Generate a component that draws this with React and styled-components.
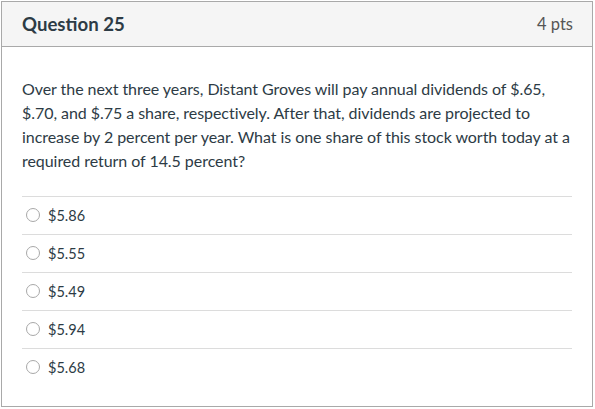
import React from "react";
import styled, { createGlobalStyle } from "styled-components";

const GlobalStyle = createGlobalStyle`
  body {
    margin: 0;
    background: #ffffff;
    font-family: Lato, "Noto Sans", sans-serif;
  }
`;

const Page = styled.div`
  padding: 1px 0 0 1px;
`;

const Card = styled.div`
  width: 592px;
  height: 406px;
  box-sizing: border-box;
  border: 1px solid #a9a9a9;
  display: flex;
  flex-direction: column;
`;

const Header = styled.div`
  height: 45px;
  box-sizing: border-box;
  border-bottom: 1px solid #a9a9a9;
  background: #f5f5f5;
  display: flex;
  align-items: center;
  justify-content: space-between;
  padding: 0 19px 0 20px;
`;

const Title = styled.h2`
  margin: 0;
  font-size: 18.6px;
  font-weight: 700;
  color: #2d3b45;
`;

const Points = styled.span`
  font-size: 16.5px;
  color: #555555;
`;

const Body = styled.div`
  padding: 30px 20px 0 20px;
`;

const Question = styled.p`
  margin: 0 0 23px;
  font-size: 16px;
  line-height: 24px;
  color: #2d3b45;
  white-space: nowrap;
  letter-spacing: -0.05px;
`;

const Answers = styled.div`
  display: flex;
  flex-direction: column;
`;

const Answer = styled.label`
  display: flex;
  align-items: center;
  gap: 8px;
  height: 38px;
  box-sizing: border-box;
  border-top: 1px solid #dcdcdc;
  padding-left: 4px;
  padding-bottom: 1px;
  font-size: 14.5px;
  color: #2d3b45;
`;

const Radio = styled.span`
  width: 14px;
  height: 14px;
  border-radius: 50%;
  border: 1px solid #a8a8a8;
  background: #ffffff;
  box-sizing: border-box;
`;

const answers = ["$5.86", "$5.55", "$5.49", "$5.94", "$5.68"];

export default function App() {
  return (
    <Page>
      <GlobalStyle />
      <Card>
        <Header>
          <Title>Question 25</Title>
          <Points>4 pts</Points>
        </Header>
        <Body>
          <Question>
            Over the next three years, Distant Groves will pay annual dividends of $.65,
            <br />
            $.70, and $.75 a share, respectively. After that, dividends are projected to
            <br />
            increase by 2 percent per year. What is one share of this stock worth today at a
            <br />
            required return of 14.5 percent?
          </Question>
          <Answers>
            {answers.map((a) => (
              <Answer key={a}>
                <Radio />
                {a}
              </Answer>
            ))}
          </Answers>
        </Body>
      </Card>
    </Page>
  );
}
